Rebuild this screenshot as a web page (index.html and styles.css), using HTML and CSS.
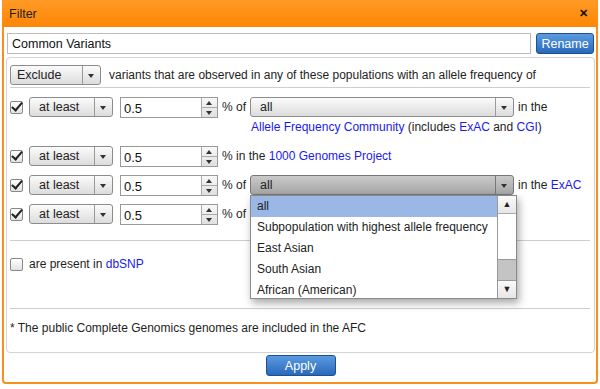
FILE: index.html
```html
<!DOCTYPE html>
<html lang="en">
<head>
    <meta charset="UTF-8">
    <title>Filter</title>
    <link rel="stylesheet" href="styles.css">
</head>
<body>
    <div class="dialog">
        <div class="titlebar">
            <span class="title">Filter</span>
            <span class="close">&#x2715;</span>
        </div>

        <div class="name-row">
            <input class="name-input" type="text" value="Common Variants">
            <button class="btn-blue rename">Rename</button>
        </div>

        <div class="panel">
            <div class="mode-row">
                <div class="select select-mode"><span class="select-label">Exclude</span><span class="select-arrow"></span></div>
                <span class="mode-text">variants that are observed in any of these populations with an allele frequency of</span>
            </div>

            <div class="rules">
                <!-- AFC -->
                <div class="rule">
                    <span class="check on"></span>
                    <div class="select select-op"><span class="select-label">at least</span><span class="select-arrow"></span></div>
                    <div class="spinner"><span class="spinner-val">0.5</span><span class="spinner-btns"><i class="up"></i><i class="down"></i></span></div>
                    <span class="rule-text">% of</span>
                    <div class="pop-col">
                        <div class="pop-line">
                            <div class="select select-pop"><span class="select-label">all</span><span class="select-arrow"></span></div>
                            <span class="rule-text">in the</span>
                        </div>
                        <div class="note"><a href="#">Allele Frequency Community</a> (includes <a href="#">ExAC</a> and <a href="#">CGI</a>)</div>
                    </div>
                </div>

                <!-- 1000 Genomes -->
                <div class="rule">
                    <span class="check on"></span>
                    <div class="select select-op"><span class="select-label">at least</span><span class="select-arrow"></span></div>
                    <div class="spinner"><span class="spinner-val">0.5</span><span class="spinner-btns"><i class="up"></i><i class="down"></i></span></div>
                    <span class="rule-text">% in the <a href="#">1000 Genomes Project</a></span>
                </div>

                <!-- ExAC (menu open) -->
                <div class="rule">
                    <span class="check on"></span>
                    <div class="select select-op"><span class="select-label">at least</span><span class="select-arrow"></span></div>
                    <div class="spinner"><span class="spinner-val">0.5</span><span class="spinner-btns"><i class="up"></i><i class="down"></i></span></div>
                    <span class="rule-text">% of</span>
                    <div class="pop-line open-wrap">
                        <div class="select select-pop active"><span class="select-label">all</span><span class="select-arrow"></span></div>
                        <span class="rule-text">in the <a href="#">ExAC</a></span>
                        <div class="menu">
                            <ul class="menu-list">
                                <li class="selected">all</li>
                                <li>Subpopulation with highest allele frequency</li>
                                <li>East Asian</li>
                                <li>South Asian</li>
                                <li>African (American)</li>
                            </ul>
                            <div class="scrollbar">
                                <span class="sb-btn">&#9650;</span>
                                <span class="sb-track"><span class="sb-thumb"></span></span>
                                <span class="sb-btn">&#9660;</span>
                            </div>
                        </div>
                    </div>
                </div>

                <!-- 4th -->
                <div class="rule">
                    <span class="check on"></span>
                    <div class="select select-op"><span class="select-label">at least</span><span class="select-arrow"></span></div>
                    <div class="spinner"><span class="spinner-val">0.5</span><span class="spinner-btns"><i class="up"></i><i class="down"></i></span></div>
                    <span class="rule-text">% of</span>
                </div>
            </div>

            <div class="dbsnp-row">
                <span class="check"></span>
                <span class="rule-text">are present in <a href="#">dbSNP</a></span>
            </div>

            <div class="footnote">* The public Complete Genomics genomes are included in the AFC</div>
        </div>

        <div class="actions">
            <button class="btn-blue apply">Apply</button>
        </div>
    </div>
</body>
</html>
```

FILE: styles.css
```css
html, body {
    margin: 0;
    background: #fff;
    font-family: "Liberation Sans", Arial, sans-serif;
    font-size: 12px;
    color: #1e1e1e;
}

a {
    color: #1a1aee;
    text-decoration: none;
}

/* ダイアログ */
.dialog {
    width: 592px;
    height: 382px;
    margin: 0 2px;
    border: 2px solid #f7901e;
    border-top: none;
    border-radius: 0 0 4px 4px;
    background: #fff;
}

.titlebar {
    display: flex;
    justify-content: space-between;
    align-items: center;
    height: 27px;
    padding: 0 7px;
    margin: 0 -2px;
    background: linear-gradient(#ff9a25, #ff8605);
    border-radius: 3px 3px 0 0;
}

.title {
    font-size: 12.5px;
    color: #222;
}

.close {
    font-size: 11px;
    font-weight: bold;
    color: #111;
    margin-right: 3px;
}

.name-row {
    display: flex;
    gap: 5px;
    padding: 6px 2px 0 3px;
}

.name-input {
    box-sizing: border-box;
    width: 525px;
    height: 21px;
    border: 1px solid #bbb;
    padding: 0 4px;
    font: inherit;
    font-size: 12.5px;
    color: #111;
}

.btn-blue {
    box-sizing: border-box;
    border: 1px solid #1c4f95;
    border-radius: 3px;
    background: linear-gradient(#5a9be0, #2a68bb);
    color: #fff;
    font: inherit;
    font-size: 12.5px;
    padding: 0;
}

.rename {
    width: 58px;
    height: 21px;
}

/* パネル */
.panel {
    box-sizing: border-box;
    margin: 3px 1px 0 2px;
    height: 296px;
    border: 1px solid #d4d4d4;
    border-radius: 4px;
    padding: 0 4px 0 3px;
}

.mode-row {
    box-sizing: border-box;
    display: flex;
    align-items: center;
    gap: 8px;
    height: 30px;
    padding-top: 4px;
    border-bottom: 1px solid #c8d0d0;
}

.select {
    box-sizing: border-box;
    display: flex;
    height: 20px;
    border: 1px solid #8c8c8c;
    border-radius: 3px;
    background: linear-gradient(#fbfbfb, #dcdcdc);
    flex-shrink: 0;
}

.select-label {
    flex: 1;
    padding-left: 9px;
    line-height: 18px;
    font-size: 12.5px;
    color: #222;
}

.select-arrow {
    width: 17px;
    border-left: 1px solid #9a9a9a;
    position: relative;
}

.select-arrow::after {
    content: "";
    position: absolute;
    left: 5px;
    top: 8px;
    border-left: 3.5px solid transparent;
    border-right: 3.5px solid transparent;
    border-top: 4px solid #333;
}

.select-mode { width: 91px; }
.select-mode .select-label { padding-left: 6px; }
.select-op { width: 84px; }
.select-pop { width: 264px; }

.select.active {
    background: linear-gradient(#c9c9c9, #a6a6a6);
    border-color: #777;
}

.select.active .select-arrow { border-left-color: #777; }

/* ルール行 */
.rules {
    padding-top: 9px;
    padding-bottom: 15px;
    border-bottom: 1px solid #c8d0d0;
}

.rule {
    display: flex;
    align-items: flex-start;
    margin-bottom: 8px;
}

.rule:last-child { margin-bottom: 0; }

.check {
    box-sizing: border-box;
    width: 13px;
    height: 13px;
    margin: 4px 6px 0 0;
    border: 1px solid #888;
    border-radius: 2px;
    background: linear-gradient(#fff, #e2e2e2);
    position: relative;
    flex-shrink: 0;
}

.check.on::after {
    content: "";
    position: absolute;
    left: 3px;
    top: -2px;
    width: 4px;
    height: 9px;
    border-right: 2px solid #222;
    border-bottom: 2px solid #222;
    transform: rotate(40deg);
}

.spinner {
    box-sizing: border-box;
    display: flex;
    width: 98px;
    height: 21px;
    margin-left: 7px;
    border: 1px solid #999;
    background: #fff;
    flex-shrink: 0;
}

.spinner-val {
    flex: 1;
    padding-left: 3px;
    line-height: 21px;
    font-size: 13px;
    color: #111;
}

.spinner-btns {
    display: flex;
    flex-direction: column;
    width: 15px;
    border-left: 1px solid #aaa;
    background: linear-gradient(#f8f8f8, #e0e0e0);
}

.spinner-btns i {
    flex: 1;
    position: relative;
}

.spinner-btns .up { border-bottom: 1px solid #aaa; }

.spinner-btns i::after {
    content: "";
    position: absolute;
    left: 4px;
    border-left: 3px solid transparent;
    border-right: 3px solid transparent;
}

.spinner-btns .up::after { top: 3px; border-bottom: 4px solid #333; }
.spinner-btns .down::after { top: 3px; border-top: 4px solid #333; }

.rule-text {
    line-height: 20px;
    margin-left: 4px;
    white-space: nowrap;
}

.pop-col {
    display: flex;
    flex-direction: column;
    margin-left: 4px;
}

.pop-line {
    display: flex;
    align-items: flex-start;
}

.open-wrap {
    position: relative;
    margin-left: 4px;
}

.note {
    padding-left: 1px;
    line-height: 21px;
}

/* 開いたドロップダウン */
.menu {
    position: absolute;
    top: 20px;
    left: 0;
    width: 267px;
    height: 104px;
    box-sizing: border-box;
    display: flex;
    border: 1px solid #8a8a8a;
    background: #fff;
    box-shadow: 2px 4px 8px rgba(0, 0, 0, 0.35);
    z-index: 5;
}

.menu-list {
    flex: 1;
    list-style: none;
    margin: 0;
    padding: 0;
}

.menu-list li {
    height: 21px;
    line-height: 21px;
    padding-left: 6px;
    white-space: nowrap;
    color: #222;
}

.menu-list li.selected {
    background: #9ab7e5;
}

.scrollbar {
    display: flex;
    flex-direction: column;
    width: 18px;
    border-left: 1px solid #999;
    background: #fff;
}

.sb-btn {
    height: 17px;
    font-size: 9px;
    line-height: 17px;
    text-align: center;
    color: #222;
    background: linear-gradient(#fafafa, #e6e6e6);
}

.sb-btn:first-child { border-bottom: 1px solid #aaa; }
.sb-btn:last-child { border-top: 1px solid #999; }

.sb-track {
    flex: 1;
    display: flex;
    flex-direction: column;
    justify-content: flex-end;
}

.sb-thumb {
    height: 20px;
    background: #c4c4c4;
    border-top: 1px solid #999;
}

.dbsnp-row {
    display: flex;
    align-items: flex-start;
    height: 68px;
    padding-top: 13px;
    box-sizing: border-box;
    border-bottom: 1px solid #c8d0d0;
}

.dbsnp-row .rule-text { margin-left: 0; }

.footnote {
    padding-top: 11px;
    line-height: 16px;
}

.actions {
    display: flex;
    justify-content: center;
    padding-top: 2px;
}

.apply {
    width: 70px;
    height: 21px;
    margin-left: 1px;
}
```
